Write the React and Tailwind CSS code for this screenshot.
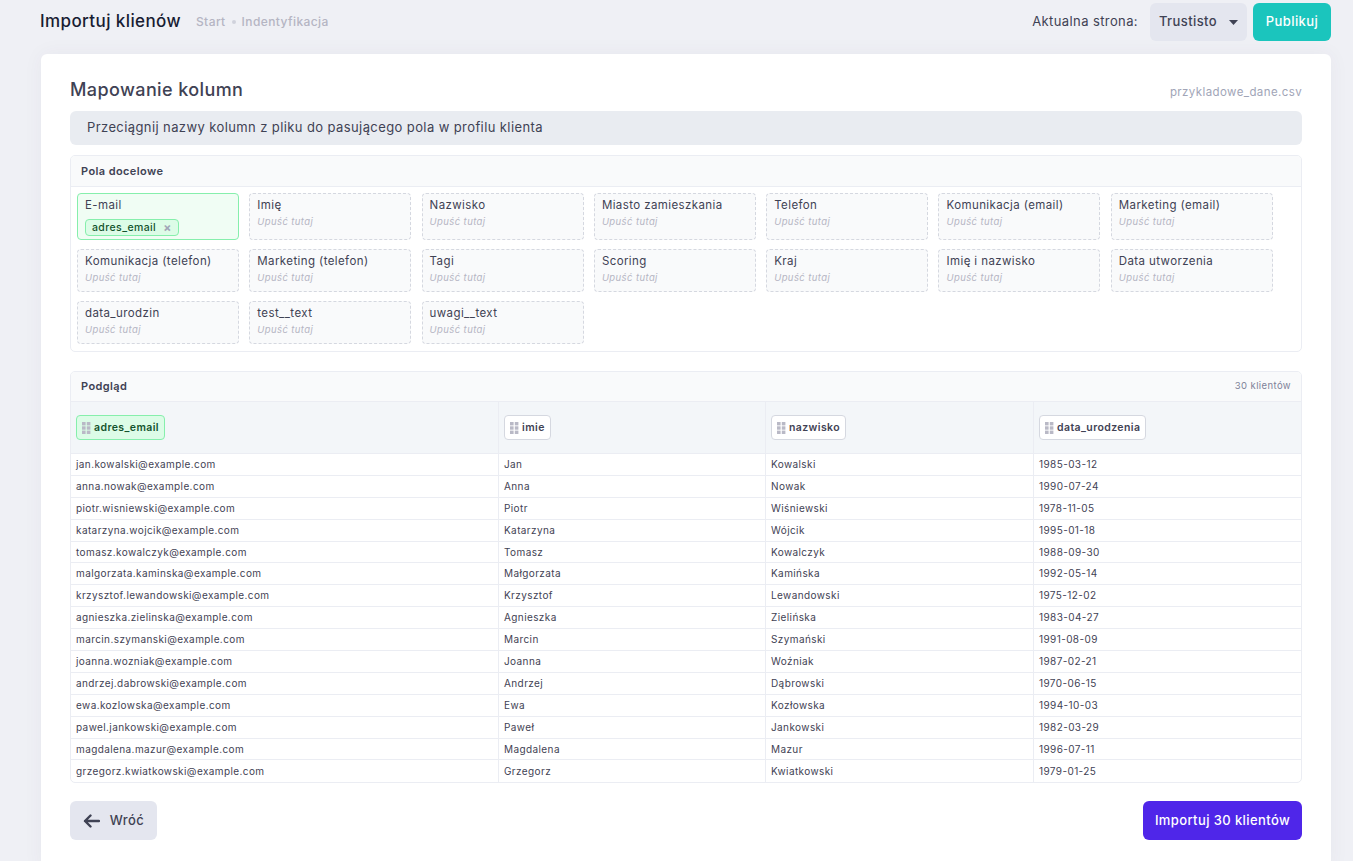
import React from "react";

const fields = [
  "E-mail", "Imię", "Nazwisko", "Miasto zamieszkania", "Telefon", "Komunikacja (email)", "Marketing (email)",
  "Komunikacja (telefon)", "Marketing (telefon)", "Tagi", "Scoring", "Kraj", "Imię i nazwisko", "Data utworzenia",
  "data_urodzin", "test__text", "uwagi__text",
];

const rows = [
  ["jan.kowalski@example.com", "Jan", "Kowalski", "1985-03-12"],
  ["anna.nowak@example.com", "Anna", "Nowak", "1990-07-24"],
  ["piotr.wisniewski@example.com", "Piotr", "Wiśniewski", "1978-11-05"],
  ["katarzyna.wojcik@example.com", "Katarzyna", "Wójcik", "1995-01-18"],
  ["tomasz.kowalczyk@example.com", "Tomasz", "Kowalczyk", "1988-09-30"],
  ["malgorzata.kaminska@example.com", "Małgorzata", "Kamińska", "1992-05-14"],
  ["krzysztof.lewandowski@example.com", "Krzysztof", "Lewandowski", "1975-12-02"],
  ["agnieszka.zielinska@example.com", "Agnieszka", "Zielińska", "1983-04-27"],
  ["marcin.szymanski@example.com", "Marcin", "Szymański", "1991-08-09"],
  ["joanna.wozniak@example.com", "Joanna", "Woźniak", "1987-02-21"],
  ["andrzej.dabrowski@example.com", "Andrzej", "Dąbrowski", "1970-06-15"],
  ["ewa.kozlowska@example.com", "Ewa", "Kozłowska", "1994-10-03"],
  ["pawel.jankowski@example.com", "Paweł", "Jankowski", "1982-03-29"],
  ["magdalena.mazur@example.com", "Magdalena", "Mazur", "1996-07-11"],
  ["grzegorz.kwiatkowski@example.com", "Grzegorz", "Kwiatkowski", "1979-01-25"],
];

const cols = [
  { name: "adres_email", w: "w-[427px]", active: true },
  { name: "imie", w: "w-[267px]" },
  { name: "nazwisko", w: "w-[268px]" },
  { name: "data_urodzenia", w: "flex-1" },
];

function Grip() {
  return (
    <svg width="9" height="12" viewBox="0 0 9 12" className="shrink-0">
      <rect x="0" y="0" width="3.6" height="3.4" fill="#b9b9c6" />
      <rect x="4.8" y="0" width="3.6" height="3.4" fill="#b9b9c6" />
      <rect x="0" y="4.3" width="3.6" height="3.4" fill="#b9b9c6" />
      <rect x="4.8" y="4.3" width="3.6" height="3.4" fill="#b9b9c6" />
      <rect x="0" y="8.6" width="3.6" height="3.4" fill="#b9b9c6" />
      <rect x="4.8" y="8.6" width="3.6" height="3.4" fill="#b9b9c6" />
    </svg>
  );
}

export default function App() {
  return (
    <div
      className="min-h-[861px] w-full bg-[#eff0f5] text-[#3f4254] overflow-hidden tracking-[0.025em]"
      style={{ fontFamily: "Inter, 'Open Sans', sans-serif" }}
    >
      {/* Header */}
      <div className="flex items-center h-[44px] pl-[40px] pr-[22px]">
        <div className="flex items-center gap-[15px]">
          <span className="text-[17px] font-medium text-[#181c32]">Importuj klienów</span>
          <span className="flex items-center gap-[6px] text-[12px] font-medium text-[#b5b5c3]">
            <span>Start</span>
            <span className="w-[4px] h-[4px] rounded-full bg-[#d0d2dc]" />
            <span>Indentyfikacja</span>
          </span>
        </div>
        <div className="ml-auto flex items-center gap-[6px]">
          <span className="text-[13px] text-[#3f4254] mr-[6px]">Aktualna strona:</span>
          <button className="h-[38px] w-[97px] rounded-[6px] bg-[#e4e6ef] flex items-center justify-center gap-[12px] text-[13px] font-medium text-[#3f4254]">
            Trustisto
            <svg width="9" height="5" viewBox="0 0 9 5"><path d="M0 0h9L4.5 5z" fill="#3f4254" /></svg>
          </button>
          <button className="h-[38px] w-[78px] rounded-[6px] bg-[#1bc5bd] text-white text-[13px] font-medium">
            Publikuj
          </button>
        </div>
      </div>

      {/* Card */}
      <div className="ml-[41px] mt-[10px] w-[1290px] bg-white rounded-[6px] shadow-[0_0_20px_rgba(82,63,105,0.05)] px-[29px] pt-[24px] pb-[30px]">
        <div className="flex items-end justify-between">
          <h2 className="text-[18px] font-medium text-[#3f4254] leading-[24px]">Mapowanie kolumn</h2>
          <span className="text-[11.5px] text-[#a1a5b7] mb-[1px]">przykladowe_dane.csv</span>
        </div>
        <div className="mt-[9px] h-[34px] rounded-[6px] bg-[#e9ecf1] flex items-center px-[17px] text-[13px] text-[#3f4254]">
          Przeciągnij nazwy kolumn z pliku do pasującego pola w profilu klienta
        </div>

        {/* Pola docelowe */}
        <div className="mt-[10px] border border-[#ebedf3] rounded-[5px] overflow-hidden">
          <div className="h-[31px] bg-[#f9fafb] border-b border-[#ebedf3] flex items-center px-[10px] text-[11px] font-semibold text-[#3f4254]">
            Pola docelowe
          </div>
          <div className="px-[6px] pt-[6px] pb-[7px] flex flex-wrap gap-x-[10.3px] gap-y-[9px]">
            {fields.map((f, i) =>
              i === 0 ? (
                <div key={f} className="w-[162px] h-[47px] rounded-[4px] border border-[#86efac] bg-[#f0fdf4] px-[7px] pt-[4px]">
                  <div className="text-[11.5px] leading-[15px] text-[#3f4254]">{f}</div>
                  <div className="mt-[3px] inline-flex items-center gap-[7px] h-[17px] px-[6px] rounded-[4px] border border-[#86efac] bg-[#dcfce7] text-[10.5px] font-medium text-[#14532d]">
                    adres_email
                    <span className="text-[#a1a5b7] text-[12px] font-bold leading-none">×</span>
                  </div>
                </div>
              ) : (
                <div
                  key={f}
                  className={`w-[162px] ${i < 7 ? "h-[47px]" : "h-[43px]"} rounded-[4px] border border-dashed border-[#d5d8e0] bg-[#f9fafb] px-[7px] pt-[4px]`}
                >
                  <div className="text-[11.5px] leading-[15px] text-[#3f4254]">{f}</div>
                  <div className="mt-[2px] text-[9.5px] italic text-[#b5b5c3]">Upuść tutaj</div>
                </div>
              )
            )}
          </div>
        </div>

        {/* Podgląd */}
        <div className="mt-[19px] border border-[#ebedf3] rounded-[5px] overflow-hidden">
          <div className="h-[30px] bg-[#f9fafb] border-b border-[#ebedf3] flex items-center justify-between px-[10px]">
            <span className="text-[11px] font-semibold text-[#3f4254]">Podgląd</span>
            <span className="text-[9.5px] text-[#7e8299]">30 klientów</span>
          </div>
          <div className="flex bg-[#f3f6f9] h-[52px] border-b border-[#ebedf3]">
            {cols.map((c, i) => (
              <div key={c.name} className={`${c.w} ${i > 0 ? "border-l border-[#ebedf3]" : ""} flex items-center px-[5px]`}>
                <div
                  className={`h-[25px] inline-flex items-center gap-[3px] px-[5px] rounded-[4px] border text-[10.5px] font-semibold ${
                    c.active
                      ? "border-[#86efac] bg-[#dcfce7] text-[#14532d]"
                      : "border-[#d5d8e0] bg-white text-[#3f4254]"
                  }`}
                >
                  <Grip />
                  {c.name}
                </div>
              </div>
            ))}
          </div>
          {rows.map((r, ri) => (
            <div key={ri} className={`flex h-[21.9px] ${ri < rows.length - 1 ? "border-b border-[#ebedf3]" : ""}`}>
              {r.map((v, ci) => (
                <div
                  key={ci}
                  className={`${cols[ci].w} ${ci > 0 ? "border-l border-[#ebedf3]" : ""} flex items-center px-[5px] text-[10px] text-[#3f4254]`}
                >
                  {v}
                </div>
              ))}
            </div>
          ))}
        </div>

        {/* Buttons */}
        <div className="mt-[18px] flex items-center justify-between">
          <button className="h-[39px] w-[87px] rounded-[6px] bg-[#e4e6ef] flex items-center justify-center gap-[10px] text-[13px] font-medium text-[#3f4254]">
            <svg width="17" height="14" viewBox="0 0 17 14" fill="none">
              <path d="M16 7H2M7.5 1.5L2 7l5.5 5.5" stroke="#3f4254" strokeWidth="2.4" strokeLinecap="round" strokeLinejoin="round" />
            </svg>
            Wróć
          </button>
          <button className="h-[39px] w-[159px] rounded-[6px] bg-[#4f26e9] text-white text-[13px] font-medium">
            Importuj 30 klientów
          </button>
        </div>
      </div>
    </div>
  );
}
